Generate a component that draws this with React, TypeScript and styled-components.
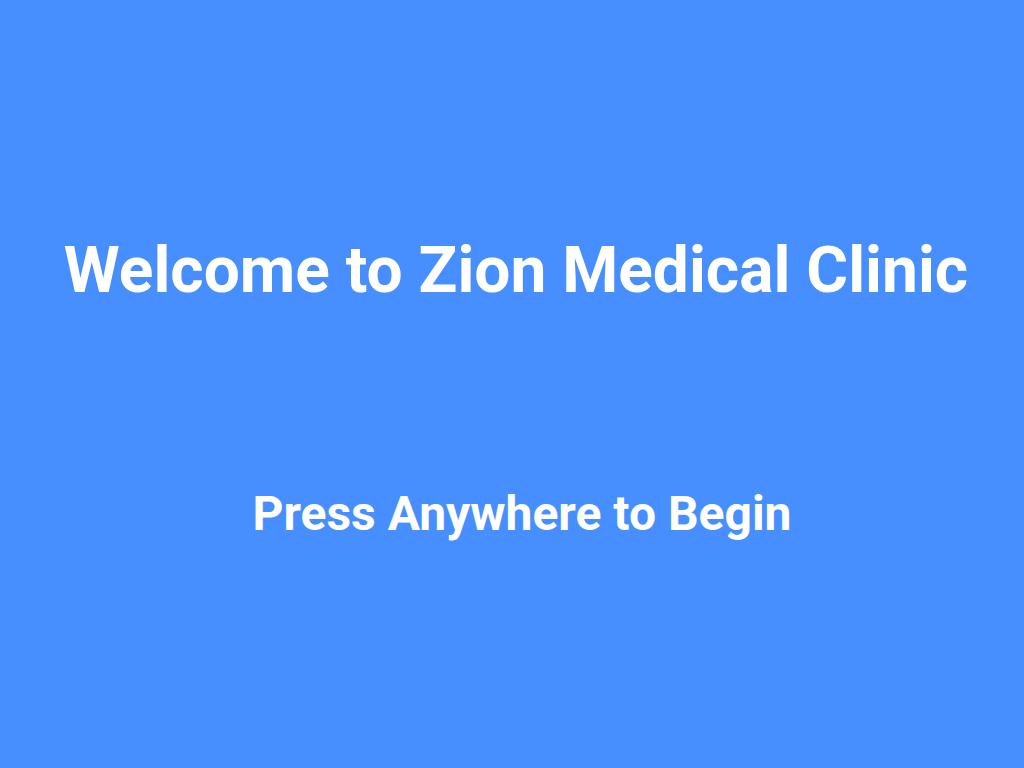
import React from "react";
import styled, { createGlobalStyle } from "styled-components";

const Global = createGlobalStyle`
  html, body { margin: 0; padding: 0; }
  body { background: #478fff; font-family: Roboto, "Liberation Sans", sans-serif; }
`;

const Screen = styled.div`
  width: 1024px;
  height: 768px;
  background: #478fff;
  display: flex;
  flex-direction: column;
  align-items: center;
  color: #ffffff;
  cursor: pointer;
`;

const Title = styled.h1`
  margin: 233px 0 0;
  padding-left: 8px;
  font-size: 64px;
  font-weight: 700;
  line-height: 76px;
`;

const Prompt = styled.p`
  margin: 177px 0 0;
  padding-left: 20px;
  font-size: 48px;
  font-weight: 700;
  line-height: 56px;
`;

export default function App() {
  return (
    <>
      <Global />
      <Screen>
        <Title>Welcome to Zion Medical Clinic</Title>
        <Prompt>Press Anywhere to Begin</Prompt>
      </Screen>
    </>
  );
}
